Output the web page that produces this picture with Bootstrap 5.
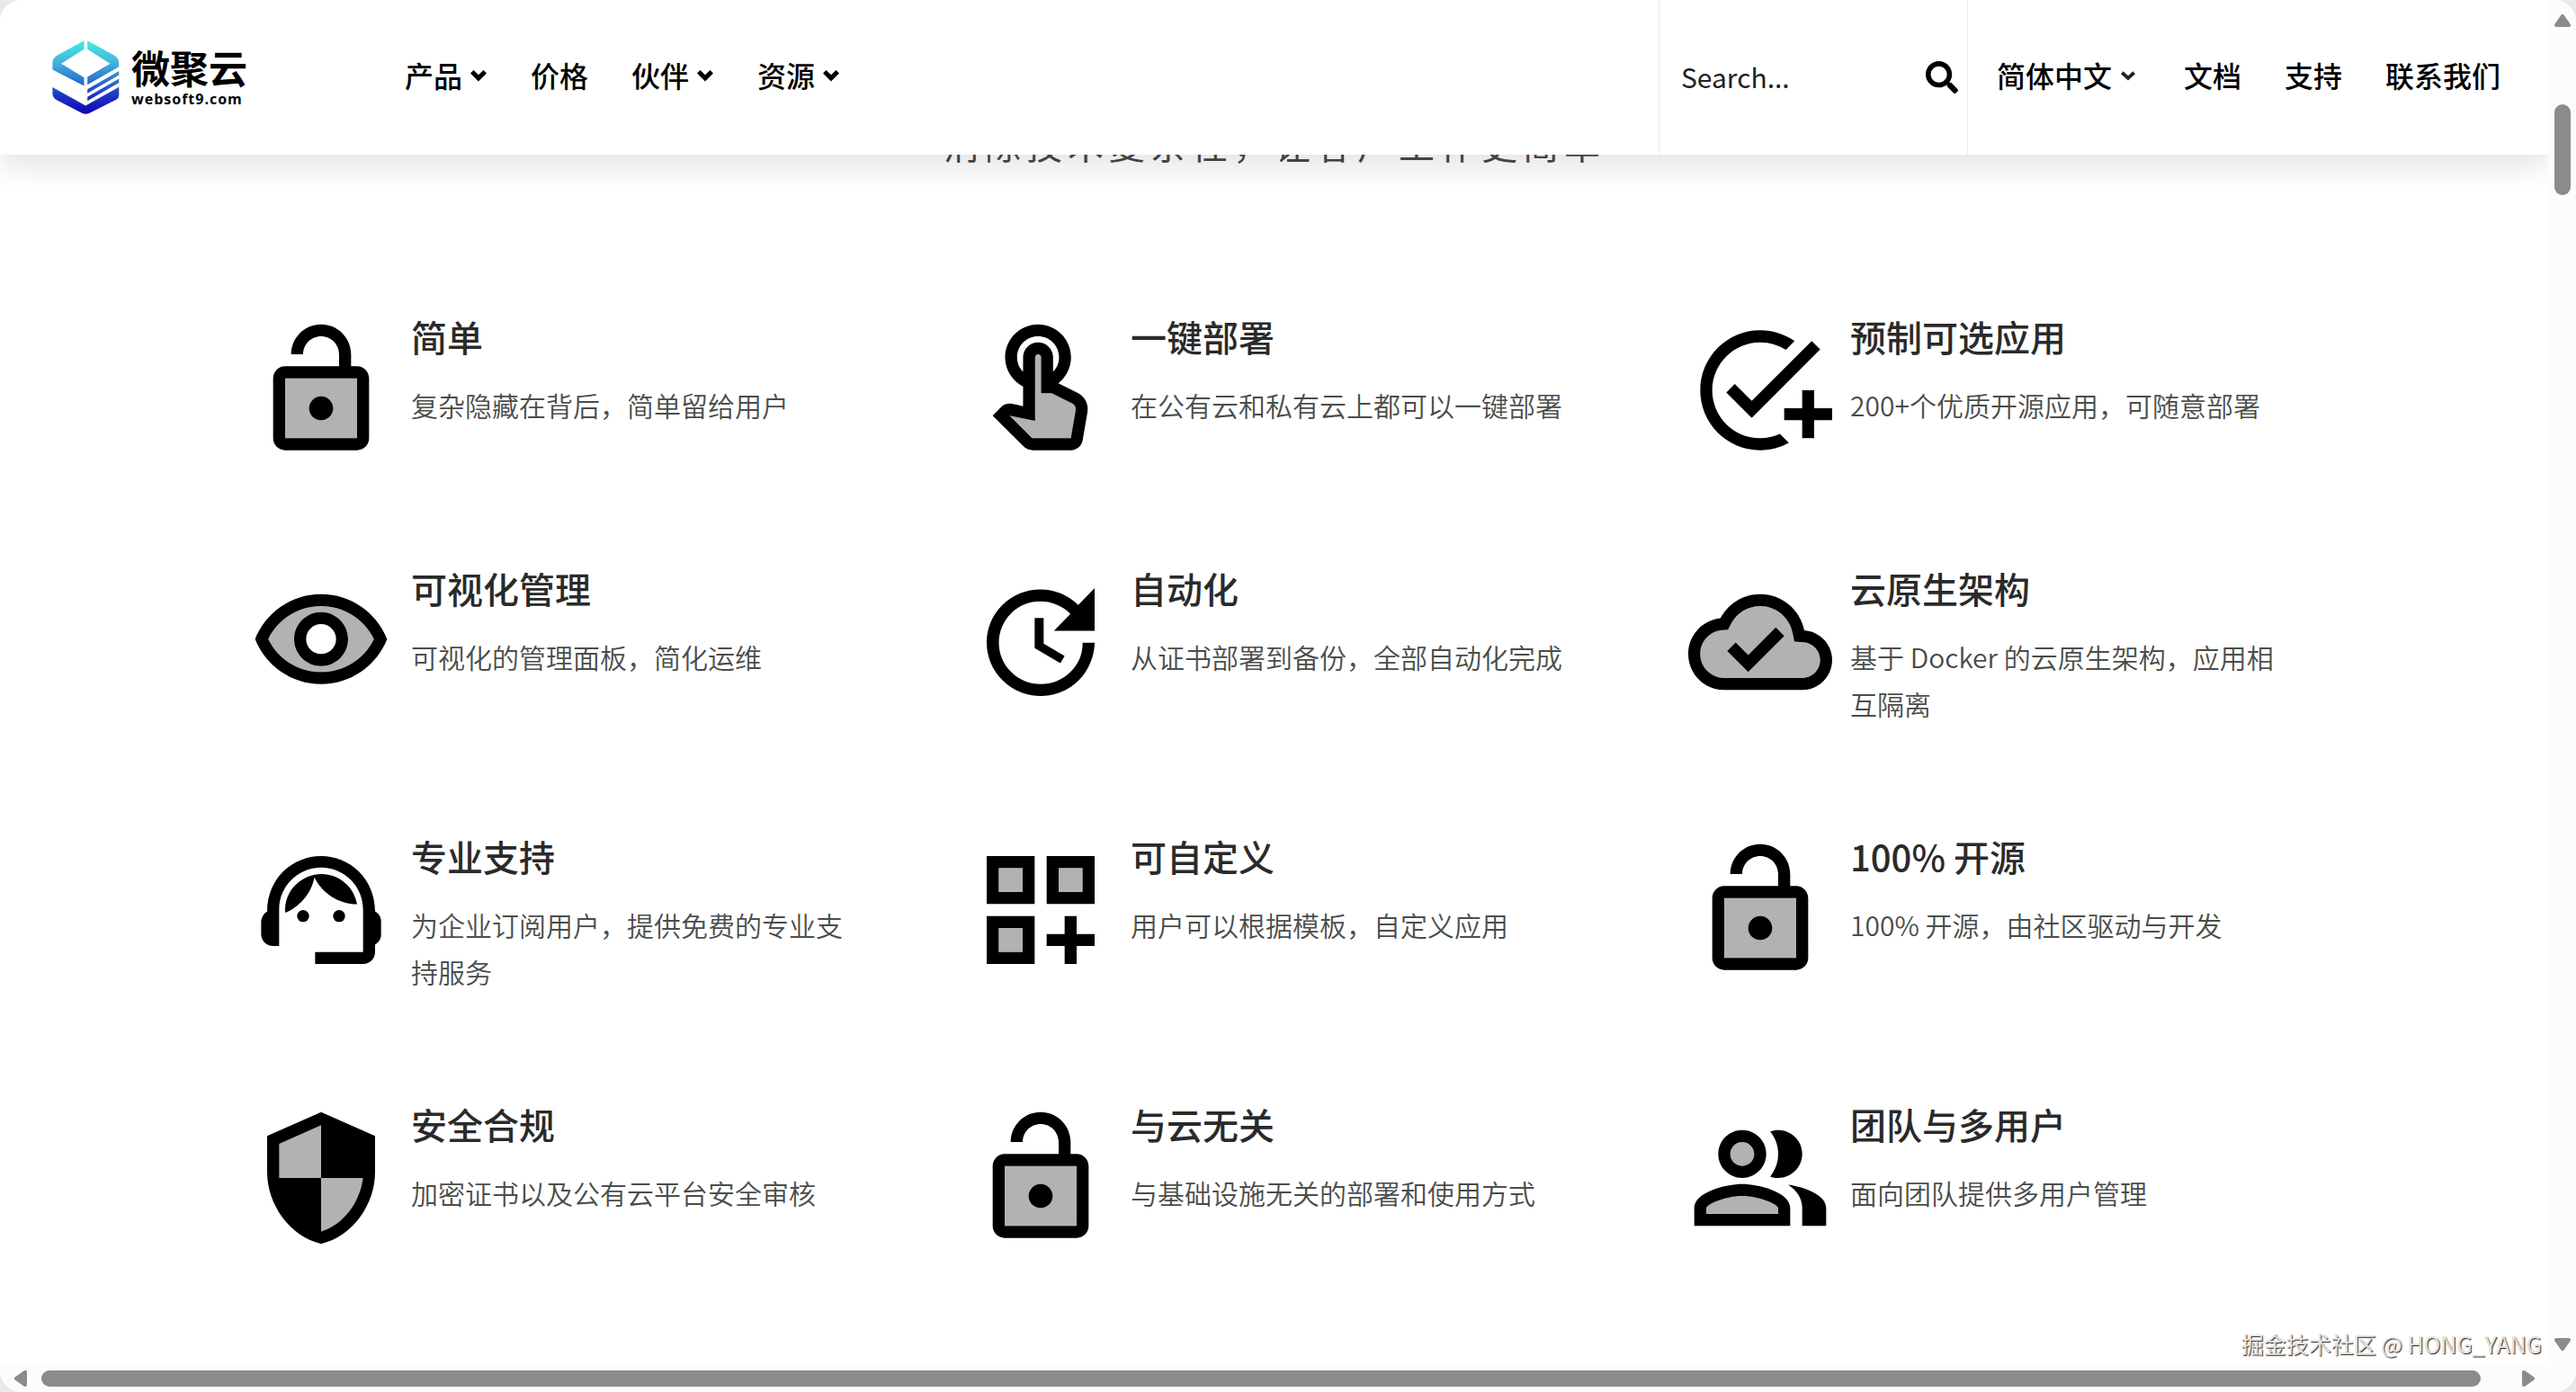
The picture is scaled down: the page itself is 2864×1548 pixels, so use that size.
<!DOCTYPE html>
<html lang="zh-CN">
<head>
<meta charset="utf-8">
<meta name="viewport" content="width=device-width, initial-scale=1">
<title>微聚云 websoft9.com</title>
<link href="https://cdn.jsdelivr.net/npm/bootstrap@5.3.0/dist/css/bootstrap.min.css" rel="stylesheet">
<style>
  html { background: #e9e9e9; }
  body { font-family: "Noto Sans CJK SC", "Noto Sans", sans-serif; background: #e9e9e9; color: #000; }
  .window-frame { background: #fcfcfc; border-radius: 24px; }
  .view { background: #fff; min-width: 0; }

  .site-header { height: 172px; background: #fff; box-shadow: 0 15px 30px rgba(0, 0, 0, .1); padding: 0 30px 0 58px; }
  .brand-mark { width: 75px; height: 82px; }
  .brand-text { margin-left: 13px; width: 130px; }
  .brand-name { font-size: 43px; line-height: 48px; font-weight: 700; }
  .brand-host { font-family: "Open Sans", sans-serif; font-size: 16px; line-height: 24px; font-weight: 700; letter-spacing: 1px; }
  .main-menu { margin-left: 150px; }
  .menu-link { font-size: 32px; line-height: 48px; font-weight: 500; color: #000; padding: 0 24px 6px; white-space: nowrap; }
  .menu-link svg { width: 20px; height: 20px; margin-left: 8px; }
  .search-cell { width: 344px; border: solid #ececec; border-width: 0 1px; padding: 0 10px 0 24px; margin-right: 8px; }
  .search-input { font-size: 30px; line-height: 48px; border: 0; outline: 0; padding: 0 0 3px; min-width: 0; background: transparent; }
  .search-input::placeholder { color: #222; opacity: 1; }
  .search-cell svg { width: 36px; height: 36px; }

  .tagline { font-size: 40px; line-height: 60px; letter-spacing: 6px; color: #484848; margin-top: -42px; margin-bottom: 164px; font-weight: 400; }
  .feature-grid { max-width: 2400px; row-gap: 120px; }
  .feature { padding: 0 70px 0 60px; }
  .feature-icon { width: 160px; height: 160px; }
  .feature-title { font-size: 40px; line-height: 40px; font-weight: 500; color: #2a2a2a; margin-bottom: 30px; }
  .feature-text { font-size: 30px; line-height: 52px; font-weight: 350; color: #4a4d4a; }

  .bar-v { width: 30px; padding: 16px 0; background: #fcfcfc; }
  .bar-h { height: 30px; padding: 0 46px 0 16px; background: #fcfcfc; }
  .bar-v svg { width: 18px; height: 14px; }
  .bar-h svg { width: 14px; height: 18px; }
  .thumb { background: #8b8b8b; border-radius: 9px; }
  .bar-v .thumb { width: 18px; }
  .bar-h .thumb { height: 18px; }
  .watermark { right: 38px; bottom: 37px; font-size: 25px; line-height: 34px; color: #e4e4e4; text-shadow: 1px 1px 1px #222; }
</style>
<script src="https://cdn.jsdelivr.net/npm/bootstrap@5.3.0/dist/js/bootstrap.bundle.min.js"></script>
</head>
<body>
<svg class="d-none" aria-hidden="true">
  <symbol id="i-caret" viewBox="0 0 18 18"><path d="M2.500 6 9 12.500 15.500 6" fill="none" stroke="#000" stroke-width="4.500"/></symbol>
  <symbol id="i-caret-thin" viewBox="0 0 18 18"><path d="M3 7 9 12.500 15 7" fill="none" stroke="#222" stroke-width="3.500"/></symbol>
  <symbol id="i-lock" viewBox="0 0 24 24"><path opacity=".3" d="M6 20h12V10H6v10z"/><path d="M18 8h-1V6c0-2.760-2.240-5-5-5S7 3.240 7 6h2c0-1.660 1.340-3 3-3s3 1.340 3 3v2H6c-1.100 0-2 .9-2 2v10c0 1.100.9 2 2 2h12c1.100 0 2-.9 2-2V10c0-1.100-.9-2-2-2zm0 12H6V10h12v10zm-6-3c1.100 0 2-.9 2-2s-.9-2-2-2-2 .9-2 2 .9 2 2 2z"/></symbol>
  <symbol id="i-touch" viewBox="0 0 24 24"><path opacity=".3" d="M17.280 14.220l-3.460-1.730h-1.750v-6c0-.28-.22-.5-.5-.5s-.5.22-.5.5v10.610l-4.250-.89 3.680 3.680c.07.06.15.1.24.1h6.300l.8-4.710c.07-.42-.15-.85-.56-1.060z"/><path d="M18.190 12.440l-3.240-1.620c1.290-1 2.120-2.560 2.120-4.320 0-3.030-2.470-5.500-5.500-5.500s-5.500 2.470-5.500 5.500c0 2.130 1.220 3.980 3 4.890v3.260c-2.150-.46-2.020-.44-2.260-.44-.53 0-1.030.21-1.410.59L4 16.220l5.090 5.090c.43.44 1.030.69 1.650.69h6.300c.98 0 1.810-.7 1.970-1.670l.8-4.710c.22-1.300-.43-2.580-1.620-3.180zm-.35 2.850l-.8 4.710h-6.300c-.09 0-.17-.04-.24-.1l-3.680-3.680 4.250.89V6.500c0-.28.22-.5.5-.5s.5.22.5.5v6h1.760l3.460 1.730c.4.2.62.63.55 1.060zM8.070 6.500c0-1.930 1.570-3.500 3.500-3.500s3.500 1.570 3.500 3.500c0 .95-.38 1.810-1 2.440V6.500c0-1.380-1.120-2.500-2.500-2.500s-2.500 1.120-2.500 2.500v2.440c-.62-.63-1-1.490-1-2.440z"/></symbol>
  <symbol id="i-task" viewBox="0 0 24 24"><path d="M22 5.180L10.590 16.600l-4.240-4.240 1.410-1.410 2.830 2.830 10-10L22 5.180zM12 20c-4.410 0-8-3.590-8-8s3.590-8 8-8c1.570 0 3.040.46 4.280 1.250l1.450-1.450C16.100 2.670 14.130 2 12 2 6.480 2 2 6.480 2 12s4.480 10 10 10c1.730 0 3.360-.44 4.780-1.220l-1.500-1.500c-1 .46-2.110.72-3.280.72zm7-5h-3v2h3v3h2v-3h3v-2h-3v-3h-2v3z"/></symbol>
  <symbol id="i-eye" viewBox="0 0 24 24"><path opacity=".3" d="M12 6c-3.790 0-7.170 2.130-8.820 5.500C4.830 14.870 8.210 17 12 17s7.170-2.130 8.820-5.500C19.170 8.130 15.790 6 12 6zm0 10c-2.480 0-4.500-2.020-4.500-4.500S9.520 7 12 7s4.500 2.020 4.500 4.500S14.480 16 12 16z"/><path d="M12 4C7 4 2.730 7.110 1 11.500 2.730 15.890 7 19 12 19s9.270-3.110 11-7.500C21.270 7.110 17 4 12 4zm0 13c-3.790 0-7.170-2.130-8.820-5.500C4.830 8.130 8.210 6 12 6s7.170 2.130 8.820 5.500C19.170 14.870 15.790 17 12 17zm0-10c-2.480 0-4.500 2.020-4.500 4.500S9.520 16 12 16s4.500-2.020 4.500-4.500S14.480 7 12 7zm0 7c-1.380 0-2.500-1.120-2.500-2.500S10.620 9 12 9s2.500 1.120 2.500 2.500S13.380 14 12 14z"/></symbol>
  <symbol id="i-update" viewBox="0 0 24 24"><path d="M21 10.120h-6.780l2.740-2.820c-2.730-2.700-7.150-2.800-9.880-.1-2.730 2.710-2.730 7.080 0 9.790s7.150 2.710 9.880 0C18.320 15.650 19 14.080 19 12.100h2c0 1.980-.88 4.550-2.640 6.290-3.510 3.480-9.210 3.480-12.720 0-3.500-3.470-3.530-9.110-.02-12.580s9.140-3.470 12.650 0L21 3v7.120zM12.500 8v4.250l3.500 2.080-.72 1.210L11 13V8h1.500z"/></symbol>
  <symbol id="i-cloud" viewBox="0 0 24 24"><path opacity=".3" d="M19.210 12.040l-1.530-.11-.3-1.500C16.880 7.860 14.620 6 12 6 9.940 6 8.080 7.140 7.120 8.960l-.5.95-1.070.11C3.530 10.240 2 11.950 2 14c0 2.210 1.790 4 4 4h13c1.650 0 3-1.350 3-3 0-1.550-1.220-2.860-2.790-2.960z"/><path d="M19.350 10.040C18.670 6.590 15.640 4 12 4 9.110 4 6.610 5.640 5.360 8.040 2.350 8.360 0 10.900 0 14c0 3.310 2.690 6 6 6h13c2.760 0 5-2.240 5-5 0-2.640-2.050-4.780-4.650-4.960zM19 18H6c-2.210 0-4-1.790-4-4 0-2.050 1.530-3.760 3.560-3.970l1.070-.11.5-.95C8.080 7.140 9.940 6 12 6c2.620 0 4.880 1.860 5.390 4.430l.3 1.500 1.530.11c1.560.1 2.780 1.410 2.780 2.960 0 1.650-1.350 3-3 3zm-9-3.820l-2.090-2.090L6.500 13.500 10 17l6.010-6.010-1.410-1.410z"/></symbol>
  <symbol id="i-agent" viewBox="0 0 24 24"><path d="M21 12.220C21 6.730 16.740 3 12 3c-4.690 0-9 3.650-9 9.280-.6.340-1 .98-1 1.720v2c0 1.100.9 2 2 2h1v-6.100c0-3.870 3.130-7 7-7s7 3.130 7 7V19h-8v2h8c1.100 0 2-.9 2-2v-1.220c.59-.31 1-.92 1-1.640v-2.300c0-.7-.41-1.310-1-1.620z"/><circle cx="9" cy="13" r="1"/><circle cx="15" cy="13" r="1"/><path d="M18 11.030C17.520 8.180 15.040 6 12.050 6c-3.030 0-6.290 2.510-6.030 6.450 2.470-1.010 4.330-3.210 4.860-5.890 1.310 2.630 4 4.440 7.120 4.470z"/></symbol>
  <symbol id="i-custom" viewBox="0 0 24 24"><path opacity=".3" d="M5 5h4v4H5zM15 5h4v4h-4zM5 15h4v4H5z"/><path d="M3 11h8V3H3v8zm2-6h4v4H5V5zM13 3v8h8V3h-8zm6 6h-4V5h4v4zM3 21h8v-8H3v8zm2-6h4v4H5v-4zM18 13h-2v3h-3v2h3v3h2v-3h3v-2h-3z"/></symbol>
  <symbol id="i-shield" viewBox="0 0 24 24"><path d="M12 1L3 5v6c0 5.550 3.840 10.740 9 12 5.160-1.260 9-6.450 9-12V5l-9-4z"/><path fill="#b2b2b2" d="M5 6.300V12h7V3.190zM12 12h7c-.53 4.120-3.280 7.790-7 8.940z"/></symbol>
  <symbol id="i-people" viewBox="0 0 24 24"><path opacity=".3" d="M9 6a2 2 0 100 4 2 2 0 000-4zM9 15c-2.700 0-5.800 1.290-6 2.010V18h12v-1c-.2-.71-3.300-2-6-2z"/><path d="M16.670 13.130C18.040 14.060 19 15.320 19 17v3h4v-3c0-2.180-3.570-3.470-6.330-3.870zM9 12c2.210 0 4-1.790 4-4s-1.790-4-4-4-4 1.790-4 4 1.790 4 4 4zm0-6c1.100 0 2 .9 2 2s-.9 2-2 2-2-.9-2-2 .9-2 2-2zM15 12c2.210 0 4-1.790 4-4s-1.790-4-4-4c-.47 0-.91.1-1.330.24C14.500 5.270 15 6.580 15 8s-.5 2.730-1.330 3.760c.42.14.86.24 1.330.24zM9 13c-2.670 0-8 1.340-8 4v3h16v-3c0-2.660-5.330-4-8-4zm6 5H3v-.99C3.200 16.290 6.300 15 9 15s5.800 1.290 6 2v1z"/></symbol>
</svg>

<div class="window-frame vh-100 d-flex flex-column overflow-hidden position-relative">
  <div class="d-flex flex-grow-1 overflow-hidden">
    <div class="view flex-grow-1 overflow-hidden">
      <header class="site-header d-flex align-items-center position-relative z-1">
        <a href="#" class="d-flex align-items-center text-decoration-none text-black">
          <svg class="brand-mark flex-shrink-0" viewBox="22 22 222 243" aria-hidden="true">
            <defs><linearGradient id="brandFill" gradientUnits="userSpaceOnUse" x1="0" y1="22" x2="0" y2="262"><stop offset="0" stop-color="#45ecdf"/><stop offset=".3" stop-color="#44b4dc"/><stop offset=".55" stop-color="#2c72cc"/><stop offset=".75" stop-color="#1c38c4"/><stop offset="1" stop-color="#1204b4"/></linearGradient></defs>
            <g fill="url(#brandFill)">
              <path d="M127 23 40 70Q23 80 23 95v23l104 54v-28L52 98l75-47z"/>
              <path d="m138 23 87 47q17 10 17 25v14l-104 59v-26l75-44-75-47z"/>
              <path d="m138 183 104-60v13l-104 60zM138 208l104-60v13l-104 60z"/>
              <path d="m23 176 109 61 110-62v28q0 9-9 14l-88 44q-13 6-25 0l-83-43q-14-8-14-22z"/>
            </g>
          </svg>
          <span class="brand-text d-flex flex-column">
            <span class="brand-name">微聚云</span>
            <span class="brand-host">websoft9.com</span>
          </span>
        </a>
        <nav class="main-menu d-flex" aria-label="主导航">
          <a href="#" class="menu-link text-decoration-none d-flex align-items-center">产品<svg aria-hidden="true"><use href="#i-caret"/></svg></a>
          <a href="#" class="menu-link text-decoration-none">价格</a>
          <a href="#" class="menu-link text-decoration-none d-flex align-items-center">伙伴<svg aria-hidden="true"><use href="#i-caret"/></svg></a>
          <a href="#" class="menu-link text-decoration-none d-flex align-items-center">资源<svg aria-hidden="true"><use href="#i-caret"/></svg></a>
        </nav>
        <form class="search-cell ms-auto h-100 d-flex align-items-center">
          <input type="text" class="search-input flex-grow-1" placeholder="Search..." aria-label="Search">
          <button type="button" class="btn p-0 border-0 lh-1 flex-shrink-0" aria-label="搜索">
            <svg viewBox="0 0 512 512" aria-hidden="true"><path d="M505 442.700 405.300 343c-4.500-4.500-10.600-7-17-7H372c27.600-35.300 44-79.700 44-128C416 93.100 322.900 0 208 0S0 93.100 0 208s93.100 208 208 208c48.300 0 92.700-16.400 128-44v16.300c0 6.400 2.500 12.500 7 17l99.700 99.700c9.400 9.400 24.600 9.400 33.900 0l28.300-28.300c9.400-9.400 9.400-24.600.1-34zM208 336c-70.700 0-128-57.200-128-128 0-70.700 57.200-128 128-128 70.700 0 128 57.200 128 128 0 70.700-57.200 128-128 128z"/></svg>
          </button>
        </form>
        <nav class="d-flex" aria-label="辅助导航">
          <a href="#" class="menu-link text-decoration-none d-flex align-items-center me-1">简体中文<svg aria-hidden="true"><use href="#i-caret-thin"/></svg></a>
          <a href="#" class="menu-link text-decoration-none">文档</a>
          <a href="#" class="menu-link text-decoration-none">支持</a>
          <a href="#" class="menu-link text-decoration-none">联系我们</a>
        </nav>
      </header>

      <main>
        <h2 class="tagline text-center">消除技术复杂性，让客户工作更简单</h2>
        <div class="feature-grid row g-0 mx-auto" id="features"></div>
      </main>
    </div>

    <div class="bar-v d-flex flex-column align-items-center flex-shrink-0" aria-hidden="true">
      <svg viewBox="0 0 18 14"><path d="M9 2 16 12H2z" fill="#8b8b8b" stroke="#8b8b8b" stroke-width="4" stroke-linejoin="round"/></svg>
      <div class="flex-grow-1 py-3">
        <div style="height:4.900%"></div>
        <div class="thumb" style="height:7.100%"></div>
      </div>
      <svg viewBox="0 0 18 14"><path d="M9 12 16 2H2z" fill="#8b8b8b" stroke="#8b8b8b" stroke-width="4" stroke-linejoin="round"/></svg>
    </div>
  </div>

  <div class="bar-h d-flex align-items-center flex-shrink-0" aria-hidden="true">
    <svg viewBox="0 0 14 18"><path d="M2 9 12 2v14z" fill="#8b8b8b" stroke="#8b8b8b" stroke-width="4" stroke-linejoin="round"/></svg>
    <div class="flex-grow-1 px-3"><div class="thumb" style="width:98.900%"></div></div>
    <svg viewBox="0 0 14 18"><path d="M12 9 2 2v14z" fill="#8b8b8b" stroke="#8b8b8b" stroke-width="4" stroke-linejoin="round"/></svg>
  </div>
  <div class="watermark position-absolute">掘金技术社区 @ HONG_YANG</div>
</div>

<script>
  const features = [
    ["lock", "简单", "复杂隐藏在背后，简单留给用户"],
    ["touch", "一键部署", "在公有云和私有云上都可以一键部署"],
    ["task", "预制可选应用", "200+个优质开源应用，可随意部署"],
    ["eye", "可视化管理", "可视化的管理面板，简化运维"],
    ["update", "自动化", "从证书部署到备份，全部自动化完成"],
    ["cloud", "云原生架构", "基于 Docker 的云原生架构，应用相互隔离"],
    ["agent", "专业支持", "为企业订阅用户，提供免费的专业支持服务"],
    ["custom", "可自定义", "用户可以根据模板，自定义应用"],
    ["lock", "100% 开源", "100% 开源，由社区驱动与开发"],
    ["shield", "安全合规", "加密证书以及公有云平台安全审核"],
    ["lock", "与云无关", "与基础设施无关的部署和使用方式"],
    ["people", "团队与多用户", "面向团队提供多用户管理"]
  ];
  document.getElementById("features").innerHTML = features.map(([icon, title, text]) => `
    <div class="feature col-4 d-flex align-items-start">
      <svg class="feature-icon flex-shrink-0" aria-hidden="true"><use href="#i-${icon}"/></svg>
      <div class="flex-grow-1 ps-3 ms-1">
        <h3 class="feature-title">${title}</h3>
        <p class="feature-text mb-1">${text}</p>
      </div>
    </div>`).join("");
</script>
</body>
</html>
